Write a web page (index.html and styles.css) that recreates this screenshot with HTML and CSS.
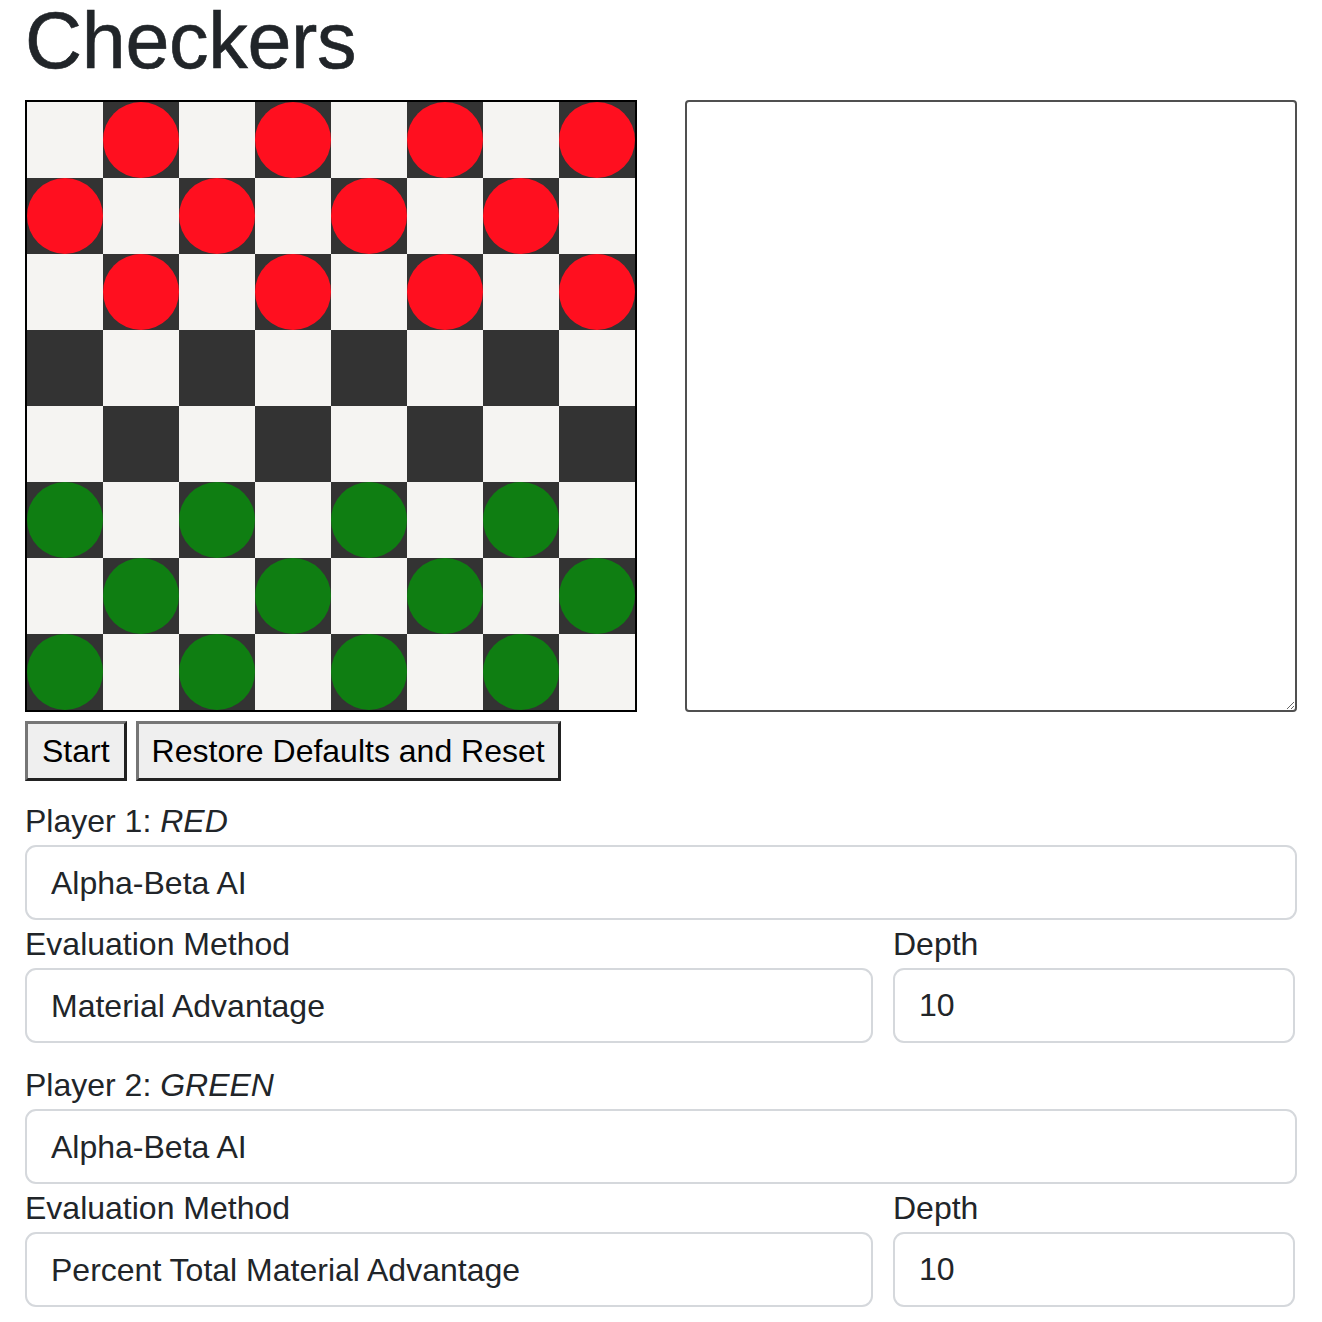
FILE: index.html
```html
<!DOCTYPE html>
<html lang="en">
<head>
<meta charset="utf-8">
<title>Checkers</title>
<link rel="stylesheet" href="styles.css">
</head>
<body>
<div class="container">
  <h1 class="title">Checkers</h1>
  <div class="top-row">
    <div class="board">
      <div class="sq light"></div><div class="sq dark"><span class="piece red"></span></div><div class="sq light"></div><div class="sq dark"><span class="piece red"></span></div><div class="sq light"></div><div class="sq dark"><span class="piece red"></span></div><div class="sq light"></div><div class="sq dark"><span class="piece red"></span></div>
      <div class="sq dark"><span class="piece red"></span></div><div class="sq light"></div><div class="sq dark"><span class="piece red"></span></div><div class="sq light"></div><div class="sq dark"><span class="piece red"></span></div><div class="sq light"></div><div class="sq dark"><span class="piece red"></span></div><div class="sq light"></div>
      <div class="sq light"></div><div class="sq dark"><span class="piece red"></span></div><div class="sq light"></div><div class="sq dark"><span class="piece red"></span></div><div class="sq light"></div><div class="sq dark"><span class="piece red"></span></div><div class="sq light"></div><div class="sq dark"><span class="piece red"></span></div>
      <div class="sq dark"></div><div class="sq light"></div><div class="sq dark"></div><div class="sq light"></div><div class="sq dark"></div><div class="sq light"></div><div class="sq dark"></div><div class="sq light"></div>
      <div class="sq light"></div><div class="sq dark"></div><div class="sq light"></div><div class="sq dark"></div><div class="sq light"></div><div class="sq dark"></div><div class="sq light"></div><div class="sq dark"></div>
      <div class="sq dark"><span class="piece green"></span></div><div class="sq light"></div><div class="sq dark"><span class="piece green"></span></div><div class="sq light"></div><div class="sq dark"><span class="piece green"></span></div><div class="sq light"></div><div class="sq dark"><span class="piece green"></span></div><div class="sq light"></div>
      <div class="sq light"></div><div class="sq dark"><span class="piece green"></span></div><div class="sq light"></div><div class="sq dark"><span class="piece green"></span></div><div class="sq light"></div><div class="sq dark"><span class="piece green"></span></div><div class="sq light"></div><div class="sq dark"><span class="piece green"></span></div>
      <div class="sq dark"><span class="piece green"></span></div><div class="sq light"></div><div class="sq dark"><span class="piece green"></span></div><div class="sq light"></div><div class="sq dark"><span class="piece green"></span></div><div class="sq light"></div><div class="sq dark"><span class="piece green"></span></div><div class="sq light"></div>
    </div>
    <textarea class="log"></textarea>
  </div>
  <div class="buttons">
    <button class="btn btn-start">Start</button>
    <button class="btn">Restore Defaults and Reset</button>
  </div>

  <div class="player first">
    <label class="lbl">Player 1: <em>RED</em></label>
    <select class="field"><option>Alpha-Beta AI</option></select>
    <div class="split">
      <div class="col">
        <label class="lbl">Evaluation Method</label>
        <select class="field"><option>Material Advantage</option></select>
      </div>
      <div class="col">
        <label class="lbl">Depth</label>
        <input class="field" type="text" value="10">
      </div>
    </div>
  </div>

  <div class="player second">
    <label class="lbl">Player 2: <em>GREEN</em></label>
    <select class="field"><option>Alpha-Beta AI</option></select>
    <div class="split">
      <div class="col">
        <label class="lbl">Evaluation Method</label>
        <select class="field"><option>Percent Total Material Advantage</option></select>
      </div>
      <div class="col">
        <label class="lbl">Depth</label>
        <input class="field" type="text" value="10">
      </div>
    </div>
  </div>
</div>
</body>
</html>
```

FILE: styles.css
```css
html, body {
  margin: 0;
  padding: 0;
  background: #ffffff;
}

body {
  font-family: "Liberation Sans", Arial, sans-serif;
  color: #212529;
  font-size: 32px;
}

.container {
  padding: 0 25px;
}

.title {
  font-size: 79px;
  line-height: 80px;
  font-weight: normal;
  letter-spacing: -0.3px;
  margin: 0 0 20px 0;
  padding-top: 1px;
  height: 79px;
  color: #212529;
  -webkit-text-stroke: 0.6px #212529;
}

.top-row {
  display: grid;
  grid-template-columns: 612px 612px;
  column-gap: 48px;
}

.board {
  width: 608px;
  height: 608px;
  border: 2px solid #000;
  display: grid;
  grid-template-columns: repeat(8, 76px);
  grid-template-rows: repeat(8, 76px);
}

.sq {
  display: flex;
  align-items: center;
  justify-content: center;
}

.sq.light { background: #f5f4f2; }
.sq.dark { background: #333333; }

.piece {
  display: block;
  width: 76px;
  height: 76px;
  border-radius: 50%;
}

.piece.red { background: #ff0f1f; }
.piece.green { background: #0f7e12; }

.log {
  box-sizing: border-box;
  width: 612px;
  height: 612px;
  margin: 0;
  border: 2px solid #505050;
  border-radius: 4px;
  background: #fff;
  padding: 4px;
  font-family: "Liberation Mono", monospace;
}

.buttons {
  display: flex;
  gap: 9px;
  margin-top: 9px;
}

.btn {
  height: 60px;
  padding: 0 13px;
  font-family: "Liberation Sans", Arial, sans-serif;
  font-size: 32px;
  color: #000;
  background: #efefef;
  border: 3px solid;
  border-color: #767676 #222222 #222222 #767676;
  border-radius: 0;
}

.btn-start {
  padding: 0 14px;
}

.player.first { margin-top: 16px; }
.player.second { margin-top: 18px; }

.lbl {
  display: block;
  font-size: 32px;
  line-height: 48px;
  color: #212529;
}

.lbl em { font-style: italic; }

.field {
  display: block;
  box-sizing: border-box;
  width: 100%;
  height: 75px;
  margin: 0;
  padding: 0 24px;
  font-family: "Liberation Sans", Arial, sans-serif;
  font-size: 32px;
  color: #212529;
  background: #fff;
  border: 2px solid #d5d8dc;
  border-radius: 11px;
  appearance: none;
  -webkit-appearance: none;
  outline: none;
}

.split {
  display: grid;
  grid-template-columns: 848px 402px;
  column-gap: 20px;
}
```
